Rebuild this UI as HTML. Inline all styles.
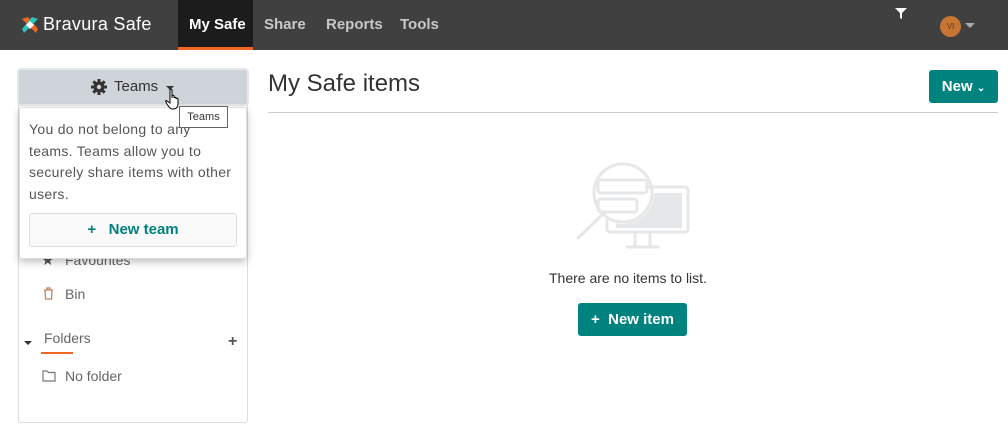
<!DOCTYPE html>
<html><head><meta charset="utf-8"><style>
*{box-sizing:border-box;margin:0;padding:0}
body{width:1008px;height:440px;overflow:hidden;background:#fff;font-family:"Liberation Sans",sans-serif;color:#333;position:relative}
.nav{position:absolute;left:0;top:0;width:1008px;height:50px;background:#404040}
.nav a{position:absolute;top:0;height:50px;line-height:50px;font-size:15px;font-weight:bold;color:#c8c8c8}
.abs{position:absolute}
.btn{position:absolute;background:#00827f;color:#fff;font-weight:bold;font-size:15px;border-radius:3px;text-align:center}
</style></head><body>
<div class="nav">
 <svg class="abs" style="left:20px;top:15px" width="20" height="20" viewBox="0 0 20 20"><path d="M2 4 L8 2 L18 14 L16 18 Z" fill="#f26522"/><path d="M18 4 L12 2 L2 14 L4 18 Z" fill="#2bc4b9"/><path d="M6 10 L10 6 L14 10 L10 14Z" fill="#fff"/></svg>
 <div class="abs" style="left:43px;top:14px;font-size:18px;color:#fff;letter-spacing:.3px">Bravura Safe</div>
 <div class="abs" style="left:178px;top:0;width:75px;height:50px;background:#1c1c1c;border-bottom:3px solid #f26522"></div>
 <a style="left:189px;color:#fff">My Safe</a>
 <a style="left:264px">Share</a>
 <a style="left:326px">Reports</a>
 <a style="left:400px">Tools</a>
 <svg class="abs" style="left:895px;top:8px" width="12" height="11" viewBox="0 0 12 11"><path d="M0 0H12L7 5V11L5 10V5Z" fill="#fff"/></svg>
 <div class="abs" style="left:940px;top:16px;width:21px;height:21px;border-radius:50%;background:#c87533;color:#6a3510;font-size:8px;text-align:center;line-height:21px">VI</div>
 <div class="abs" style="left:965px;top:23px;border-left:5px solid transparent;border-right:5px solid transparent;border-top:5px solid #aaa"></div>
</div>

<!-- sidebar -->
<div class="abs" style="left:18px;top:103px;width:230px;height:320px;border:1px solid #ddd;border-radius:3px"></div>
<div class="abs" style="left:17px;top:68px;width:232px;height:38px;border:2px solid #e4e7ea;border-radius:4px;background:#cfd4da"></div>
<svg class="abs" style="left:91px;top:79px" width="16" height="16" viewBox="0 0 16 16"><circle cx="8" cy="8" r="5.5" fill="#333"/><g stroke="#333" stroke-width="3"><path d="M8 0V16M0 8H16M2.3 2.3L13.7 13.7M13.7 2.3L2.3 13.7"/></g><circle cx="8" cy="8" r="2.2" fill="#cfd4da"/></svg>
<div class="abs" style="left:114px;top:78px;font-size:15px;color:#333">Teams</div>
<div class="abs" style="left:166px;top:86px;border-left:4px solid transparent;border-right:4px solid transparent;border-top:4px solid #333"></div>

<div class="abs" style="left:65px;top:252px;font-size:14px;color:#666">Favourites</div>
<div class="abs" style="left:41px;top:251px;font-size:15px;color:#555">★</div>
<svg class="abs" style="left:43px;top:287px" width="11" height="13" viewBox="0 0 11 13"><path d="M1 3H10M4 3V1H7V3M2 3L2.5 12H8.5L9 3" stroke="#c0845e" stroke-width="1.3" fill="none"/></svg>
<div class="abs" style="left:65px;top:286px;font-size:14px;color:#666">Bin</div>
<div class="abs" style="left:24px;top:341px;border-left:4px solid transparent;border-right:4px solid transparent;border-top:4px solid #333"></div>
<div class="abs" style="left:44px;top:330px;font-size:14px;color:#666">Folders</div>
<div class="abs" style="left:41px;top:352px;width:32px;height:2px;background:#f26522"></div>
<div class="abs" style="left:228px;top:333px;font-size:16px;font-weight:bold;color:#555">+</div>
<svg class="abs" style="left:42px;top:370px" width="14" height="12" viewBox="0 0 14 12"><path d="M1 1H5L6.5 2.5H13V11H1Z" stroke="#777" stroke-width="1.2" fill="none"/></svg>
<div class="abs" style="left:65px;top:368px;font-size:14px;color:#666">No folder</div>

<!-- popup -->
<div class="abs" style="left:19px;top:107px;width:228px;height:152px;background:#fff;border:1px solid #ddd;border-radius:3px;box-shadow:0 3px 8px rgba(0,0,0,.25)"></div>
<div class="abs" style="left:29px;top:119px;width:215px;font-size:14px;line-height:21.5px;color:#555;letter-spacing:.3px;white-space:nowrap">You do not belong to any<br>teams. Teams allow you to<br>securely share items with other<br>users.</div>
<div class="abs" style="left:29px;top:213px;width:208px;height:34px;border:1px solid #ddd;border-radius:3px;background:#fafafa;color:#00827f;font-weight:bold;font-size:15px;text-align:center;line-height:32px">+&nbsp;&nbsp; New team</div>
<div class="abs" style="left:179px;top:106px;width:49px;height:22px;border:1px solid #666;background:#fff;font-size:11px;line-height:20px;text-align:center;color:#333">Teams</div>
<svg class="abs" style="left:164px;top:88px" width="20" height="24" viewBox="0 0 20 24"><path d="M6 2C6 1 8 1 8 2V10L8 8C8 7 10 7 10 8V10C10 9 12 9 12 10V11C12 10 14 10 14 11V16C14 19 12 21 10 21H8C6 21 5 19 3 16L2 14C1 13 2 12 3 13L6 15Z" fill="#fff" stroke="#000" stroke-width="1"/></svg>

<!-- main -->
<div class="abs" style="left:268px;top:70px;font-size:24px;color:#333">My Safe items</div>
<div class="abs" style="left:268px;top:112px;width:730px;height:1px;background:#ccc"></div>
<div class="btn" style="left:929px;top:70px;width:69px;height:33px;line-height:33px">New <span style="font-size:10px">&#8964;</span></div>

<svg class="abs" style="left:560px;top:150px" width="140" height="110" viewBox="0 0 140 110">
 <rect x="56" y="43" width="66" height="35" fill="#e6e7e8"/>
 <circle cx="63" cy="43" r="31" fill="#fff"/>
 <g stroke="#e6e7e8" stroke-width="3" fill="none" stroke-linecap="round">
  <path d="M88 37H125a3 3 0 0 1 3 3V79a3 3 0 0 1-3 3H50a3 3 0 0 1-3-3V70"/>
  <path d="M75 82V96M90 82V96M67 97H98"/>
  <circle cx="63" cy="43" r="29"/>
  <path d="M43 64L18 88"/>
  <rect x="38" y="30" width="49" height="13" rx="3"/>
  <rect x="38" y="49" width="39" height="13" rx="3"/>
 </g>
</svg>
<div class="abs" style="left:549px;top:270px;font-size:14px;color:#333">There are no items to list.</div>
<div class="btn" style="left:578px;top:303px;width:109px;height:33px;line-height:33px">+&nbsp; New item</div>
</body></html>
